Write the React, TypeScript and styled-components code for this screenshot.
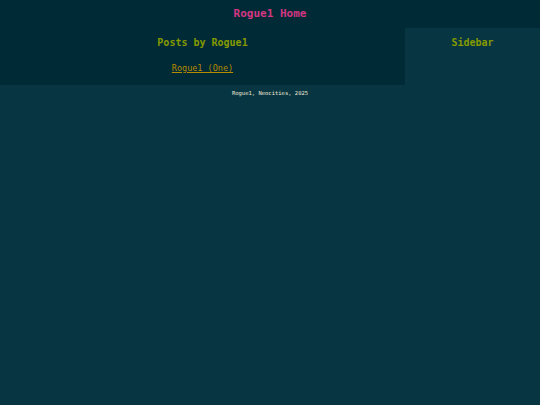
import React from 'react';
import styled, { createGlobalStyle } from 'styled-components';

const GlobalStyle = createGlobalStyle`
  html, body {
    margin: 0;
    padding: 0;
    background: #073642;
    font-family: "DejaVu Sans Mono", "Liberation Mono", monospace;
  }
  body {
    min-height: 405px;
  }
`;

const Header = styled.header`
  height: 28px;
  background: #002b36;
  display: flex;
  align-items: center;
  justify-content: center;
  padding-bottom: 2px;
  box-sizing: border-box;
`;

const Title = styled.h1`
  margin: 0;
  font-size: 11px;
  font-weight: bold;
  color: #d33682;
`;

const Layout = styled.div`
  display: flex;
  height: 57px;
`;

const Main = styled.main`
  width: 405px;
  background: #002b36;
  text-align: center;
  padding-top: 9px;
  box-sizing: border-box;
`;

const Aside = styled.aside`
  flex: 1;
  background: #073642;
  text-align: center;
  padding-top: 9px;
  box-sizing: border-box;
`;

const Heading = styled.h2`
  margin: 0;
  font-size: 10px;
  font-weight: bold;
  color: #859900;
  line-height: 12px;
`;

const PostList = styled.ul`
  list-style: none;
  margin: 7px 0 0;
  padding: 0;
`;

const PostLink = styled.a`
  font-size: 8.5px;
  color: #b58900;
  text-decoration: underline;
`;

const Footer = styled.footer`
  text-align: center;
  font-size: 5.5px;
  color: #eee8d5;
  padding-top: 5px;
`;

export default function App() {
  return (
    <>
      <GlobalStyle />
      <Header>
        <Title>Rogue1 Home</Title>
      </Header>
      <Layout>
        <Main>
          <Heading>Posts by Rogue1</Heading>
          <PostList>
            <li>
              <PostLink href="#">Rogue1 (One)</PostLink>
            </li>
          </PostList>
        </Main>
        <Aside>
          <Heading>Sidebar</Heading>
        </Aside>
      </Layout>
      <Footer>Rogue1, Neocities, 2025</Footer>
    </>
  );
}
